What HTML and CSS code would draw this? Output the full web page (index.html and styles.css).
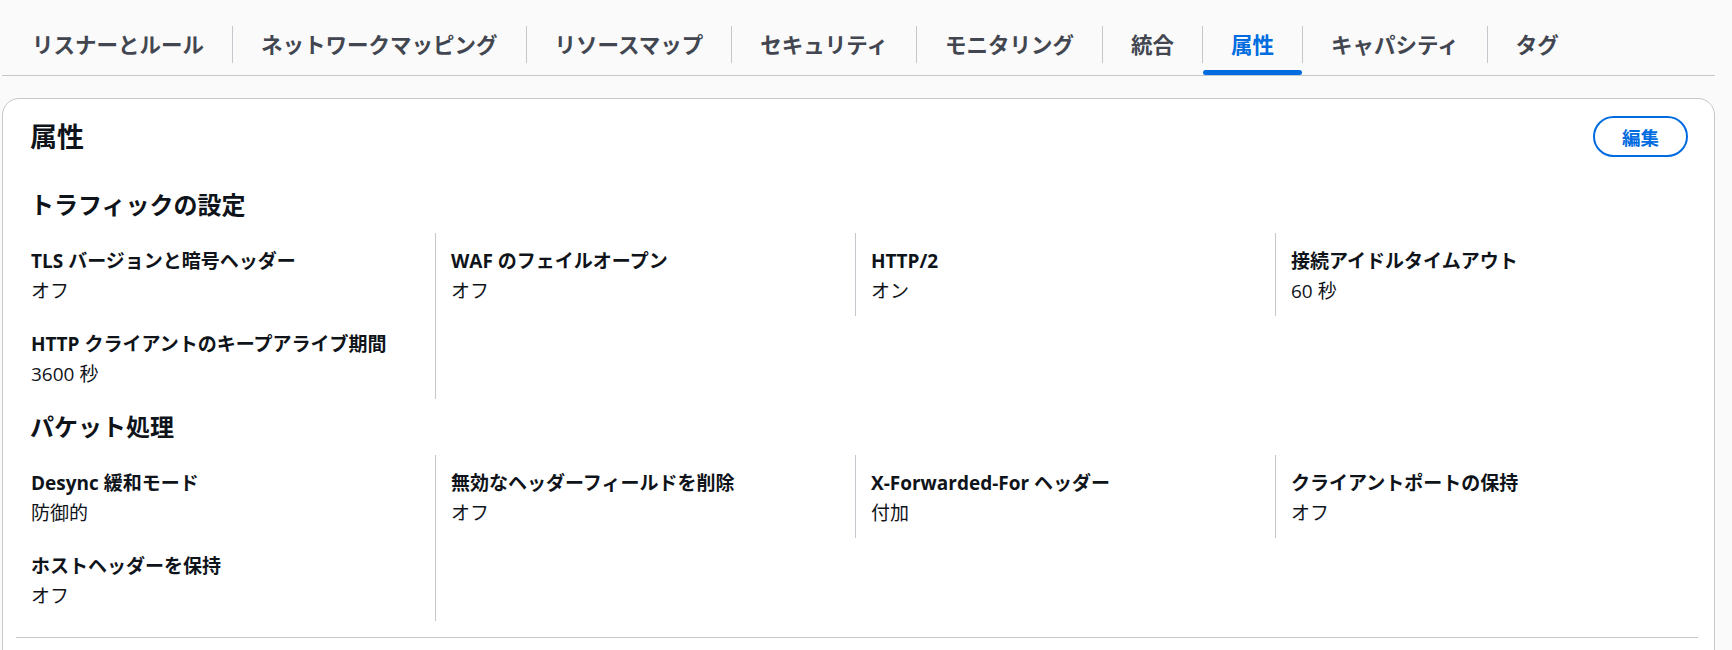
FILE: index.html
```html
<!DOCTYPE html>
<html lang="ja">
<head>
<meta charset="utf-8">
<title>属性</title>
<link rel="stylesheet" href="styles.css">
</head>
<body>
<div class="page">
  <nav class="tabs">
    <div class="tab"><span class="tab-label">リスナーとルール</span></div>
    <div class="tab sep"><span class="tab-label">ネットワークマッピング</span></div>
    <div class="tab sep"><span class="tab-label">リソースマップ</span></div>
    <div class="tab sep"><span class="tab-label">セキュリティ</span></div>
    <div class="tab sep"><span class="tab-label">モニタリング</span></div>
    <div class="tab sep"><span class="tab-label">統合</span></div>
    <div class="tab sep active"><span class="tab-label">属性</span></div>
    <div class="tab sep"><span class="tab-label">キャパシティ</span></div>
    <div class="tab sep"><span class="tab-label">タグ</span></div>
  </nav>

  <section class="card">
    <div class="card-header">
      <h2 class="card-title">属性</h2>
      <button class="btn">編集</button>
    </div>

    <h3 class="section-title first">トラフィックの設定</h3>
    <div class="kv-grid">
      <div class="kv"><div class="kv-label">TLS バージョンと暗号ヘッダー</div><div class="kv-value">オフ</div></div>
      <div class="kv"><div class="kv-label">WAF のフェイルオープン</div><div class="kv-value">オフ</div></div>
      <div class="kv"><div class="kv-label">HTTP/2</div><div class="kv-value">オン</div></div>
      <div class="kv last-col"><div class="kv-label">接続アイドルタイムアウト</div><div class="kv-value">60 秒</div></div>
      <div class="kv"><div class="kv-label">HTTP クライアントのキープアライブ期間</div><div class="kv-value">3600 秒</div></div>
    </div>

    <h3 class="section-title">パケット処理</h3>
    <div class="kv-grid">
      <div class="kv"><div class="kv-label">Desync 緩和モード</div><div class="kv-value">防御的</div></div>
      <div class="kv"><div class="kv-label">無効なヘッダーフィールドを削除</div><div class="kv-value">オフ</div></div>
      <div class="kv"><div class="kv-label">X-Forwarded-For ヘッダー</div><div class="kv-value">付加</div></div>
      <div class="kv last-col"><div class="kv-label">クライアントポートの保持</div><div class="kv-value">オフ</div></div>
      <div class="kv"><div class="kv-label">ホストヘッダーを保持</div><div class="kv-value">オフ</div></div>
    </div>
    <div class="divider"></div>
  </section>
</div>
</body>
</html>
```

FILE: styles.css
```css
* { box-sizing: border-box; }

html, body {
  margin: 0;
  padding: 0;
  background: #fafafa;
  font-family: "Open Sans", "Noto Sans CJK JP", sans-serif;
  color: #0f141a;
}

.page {
  margin-left: 2px;
  width: 1713px;
}

/* Tabs */
.tabs {
  display: flex;
  align-items: flex-end;
  height: 76px;
  padding-left: 2px;
  border-bottom: 1px solid #c6c6cd;
}

.tab {
  position: relative;
  height: 75px;
  padding-top: 26px;
}

.tab-label {
  display: block;
  height: 37px;
  line-height: 37px;
  padding: 0 28px;
  font-size: 21.5px;
  font-weight: 700;
  color: #424650;
  white-space: nowrap;
}

.tab.sep .tab-label {
  border-left: 1px solid #c6c6cd;
}

.tab.active .tab-label {
  color: #006ce0;
}

.tab.active::after {
  content: "";
  position: absolute;
  left: 1px;
  right: 0;
  bottom: 0;
  height: 5px;
  border-radius: 4px;
  background: #006ce0;
}

/* Card */
.card {
  margin-top: 22px;
  background: #ffffff;
  border: 1px solid #c6c6cd;
  border-radius: 17px;
  padding: 0 26px 40px 27px;
}

.card-header {
  display: flex;
  align-items: center;
  justify-content: space-between;
  padding-top: 17px;
}

.card-title {
  margin: 0;
  font-size: 27px;
  line-height: 31px;
  font-weight: 700;
}

.btn {
  height: 41px;
  width: 95px;
  border: 2px solid #006ce0;
  border-radius: 21px;
  background: #ffffff;
  color: #006ce0;
  font-family: "Open Sans", "Noto Sans CJK JP", sans-serif;
  font-size: 18.5px;
  font-weight: 700;
  padding: 0;
  cursor: pointer;
}

.section-title {
  margin: 13px 0 0;
  font-size: 24px;
  line-height: 29px;
  font-weight: 700;
}

.section-title.first {
  margin-top: 33px;
}

.kv-grid {
  display: grid;
  grid-template-columns: repeat(4, 420px);
  margin: 14px -10px 0 -14px;
}

.kv {
  padding: 15px 15px 12px 15px;
  border-right: 1px solid #c6c6cd;
}

.kv.last-col {
  border-right: none;
}

.kv-label {
  font-size: 19px;
  line-height: 26px;
  font-weight: 700;
  white-space: nowrap;
}

.kv-value {
  margin-top: 4px;
  font-size: 19px;
  line-height: 26px;
  font-weight: 400;
}

.divider {
  height: 1px;
  background: #c6c6cd;
  margin: 16px -10px 0 -14px;
}
```
